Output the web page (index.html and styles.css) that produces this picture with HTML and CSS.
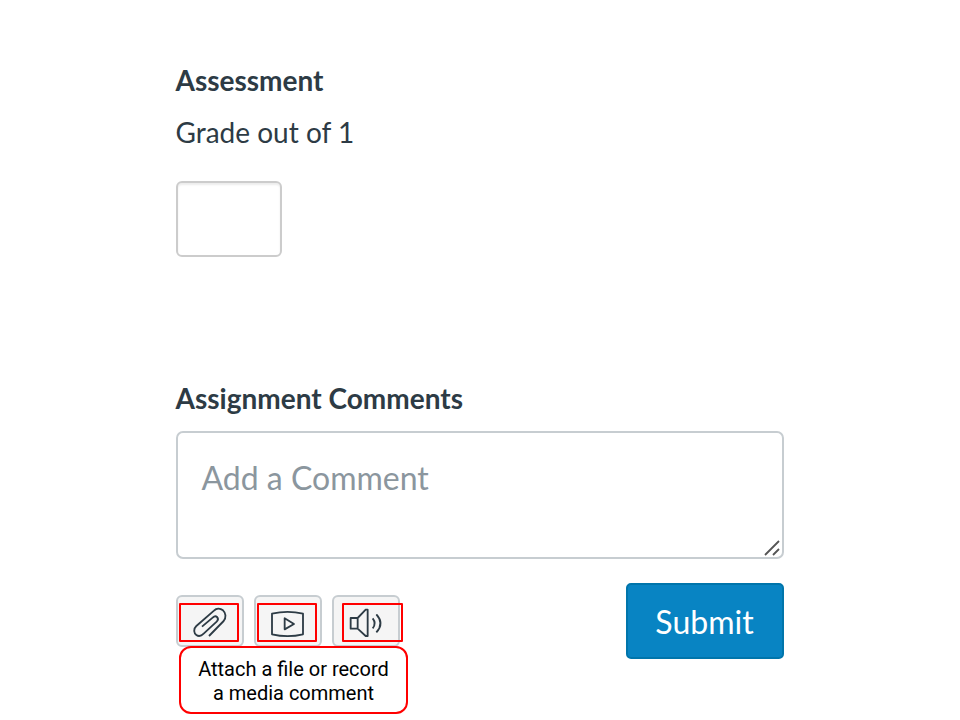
FILE: index.html
```html
<!DOCTYPE html>
<html lang="en">
<head>
<meta charset="utf-8">
<title>Assessment</title>
<link rel="stylesheet" href="styles.css">
</head>
<body>
<main class="panel">
  <section class="assessment">
    <h2 class="heading">Assessment</h2>
    <label class="grade-label" for="grade">Grade out of 1</label>
    <input class="grade-input" id="grade" type="text">
  </section>
  <section class="comments">
    <h2 class="heading">Assignment Comments</h2>
    <div class="comment-box">
      <span class="placeholder">Add a Comment</span>
      <svg class="resize-grip" viewBox="0 0 16 16"><path d="M1 15 15 1M9 15l6-6"/></svg>
    </div>
    <div class="actions">
      <div class="tools">
        <button class="tool" aria-label="Attach a file">
          <svg class="icon" viewBox="75 45 120 108"><path d="M132 138 176 93C184 83 183 69 174 61 165 54 154 55 147 62L94 108C84 117 87 130 94 135 101 140 109 138 116 131L155 95C160 90 159 84 156 81 152 77 147 79 143 83L111 110"/></svg>
          <span class="mark"></span>
        </button>
        <button class="tool" aria-label="Record media">
          <svg class="icon" viewBox="0 0 120 108"><path d="M12 26Q59 15 105 26V88Q59 99 12 88ZM50 40V73L78 57Z"/></svg>
          <span class="mark"></span>
        </button>
        <button class="tool" aria-label="Record audio">
          <svg class="icon" viewBox="0 0 120 108"><path d="M14 39H35V71H14ZM35 39 59 14H65V93H59L35 71M80 40Q92 55 80 70M91 28Q116 55 91 82"/></svg>
          <span class="mark mark-right"></span>
        </button>
        <div class="callout">Attach a file or record<br>a media comment</div>
      </div>
      <button class="submit">Submit</button>
    </div>
  </section>
</main>
</body>
</html>
```
FILE: styles.css
```css
* { box-sizing: border-box; }
body { margin: 0; background: #fff; color: #2d3b45; font-family: Lato, sans-serif; overflow: hidden; }
button { font: inherit; padding: 0; margin: 0; }
.panel { width: 608px; height: 720px; margin-left: 175.5px; padding-top: 59px; }
.assessment { height: 318px; }
.heading { margin: 0; font-size: 28px; line-height: 42px; font-weight: 700; }
.grade-label { display: block; margin-top: 10px; font-size: 28px; line-height: 42px; }
.grade-input { display: block; width: 106px; height: 76px; margin-top: 28px; border: 2px solid #ccc; border-radius: 6px; box-shadow: inset 0 2px 2px rgba(0,0,0,.075); }
.comment-box { position: relative; height: 128px; margin-top: 12px; padding: 21px 24px; border: 2px solid #c7cdd1; border-radius: 7px; }
.placeholder { display: block; color: #8b969e; font-size: 32px; line-height: 48px; }
.resize-grip { position: absolute; right: 2px; bottom: 1px; width: 16px; height: 16px; fill: none; stroke: #555; stroke-width: 1.8; }
.actions { display: flex; justify-content: space-between; margin-top: 24px; }
.tools { position: relative; display: flex; gap: 10px; padding-top: 12px; }
.tool { position: relative; width: 68px; height: 52px; padding-top: 4px; border: 2px solid #c7cdd1; border-radius: 6px; background: #f5f5f5; }
.icon { display: block; width: 40px; height: 36px; margin-left: 12px; fill: none; stroke: #2d3b45; stroke-width: 5.5; stroke-linejoin: round; }
.mark { position: absolute; left: 1.5px; top: 6px; width: 60px; height: 39px; border: 2px solid #f00; border-radius: 1px; }
.mark-right { left: 8.5px; width: 61px; }
.callout { position: absolute; left: 3.5px; top: 63px; width: 229px; height: 68px; padding-top: 9px; border: 2px solid #f00; border-radius: 12px; background: #fff; color: #000; font: 20px/24px Roboto, sans-serif; text-align: center; }
.submit { width: 158px; height: 76px; border: 2px solid #0075ab; border-radius: 5px; background: #0884c3; color: #fff; font-size: 32px; }
```
